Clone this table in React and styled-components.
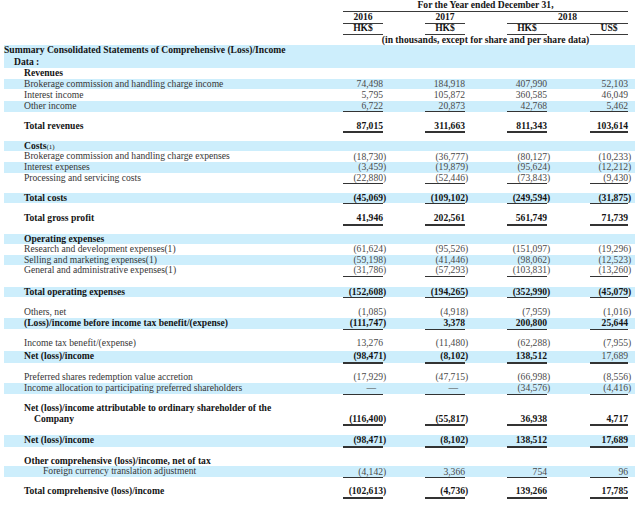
import React from 'react';
import styled, { createGlobalStyle } from 'styled-components';

const GlobalStyle = createGlobalStyle`
  html, body {
    margin: 0;
    padding: 0;
    background: #fff;
  }
  body {
    font-family: "Liberation Serif", "Times New Roman", serif;
    font-size: 9.6px;
    color: #333;
  }
`;

// label | 2016 | gap | 2017 | gap | 2018 HK$ | gap | 2018 US$ | trail
const COLS = '339px 44px 38px 44px 38px 44px 39px 42px 3px';
const VALUE_COLS = [2, 4, 6, 8];

const rows = [
  { label: 'Summary Consolidated Statements of Comprehensive (Loss)/Income', bold: true, band: true, indent: 0, h: 11.3 },
  { label: 'Data :', bold: true, band: true, indent: 10, h: 11.4 },
  { label: 'Revenues', bold: true, h: 11 },
  { label: 'Brokerage commission and handling charge income', band: true, values: ['74,498', '184,918', '407,990', '52,103'], h: 10.7 },
  { label: 'Interest income', values: ['5,795', '105,872', '360,585', '46,049'], h: 11.3 },
  { label: 'Other income', band: true, values: ['6,722', '20,873', '42,768', '5,462'], rule: 'single', h: 11 },
  { label: 'Total revenues', bold: true, values: ['87,015', '311,663', '811,343', '103,614'], rule: 'double', gap: 8.5, h: 13.3 },
  { label: 'Costs', note: '(1)', bold: true, band: true, gap: 7.2, h: 10.5 },
  { label: 'Brokerage commission and handling charge expenses', values: ['(18,730)', '(36,777)', '(80,127)', '(10,233)'], h: 11.1 },
  { label: 'Interest expenses', band: true, values: ['(3,459)', '(19,879)', '(95,624)', '(12,212)'], h: 10.4 },
  { label: 'Processing and servicing costs', values: ['(22,880)', '(52,446)', '(73,843)', '(9,430)'], rule: 'single', h: 10.6 },
  { label: 'Total costs', bold: true, band: true, values: ['(45,069)', '(109,102)', '(249,594)', '(31,875)'], rule: 'single', gap: 9.4, h: 10.6 },
  { label: 'Total gross profit', bold: true, values: ['41,946', '202,561', '561,749', '71,739'], rule: 'double', gap: 8.7, h: 14 },
  { label: 'Operating expenses', bold: true, band: true, gap: 8, h: 10.3 },
  { label: 'Research and development expenses(1)', values: ['(61,624)', '(95,526)', '(151,097)', '(19,296)'], h: 10.4 },
  { label: 'Selling and marketing expenses(1)', band: true, values: ['(59,198)', '(41,446)', '(98,062)', '(12,523)'], h: 10.3 },
  { label: 'General and administrative expenses(1)', values: ['(31,786)', '(57,293)', '(103,831)', '(13,260)'], rule: 'single', h: 10.5 },
  { label: 'Total operating expenses', bold: true, band: true, values: ['(152,608)', '(194,265)', '(352,990)', '(45,079)'], rule: 'single', gap: 11.2, h: 10.6 },
  { label: 'Others, net', values: ['(1,085)', '(4,918)', '(7,959)', '(1,016)'], gap: 8.5, h: 12.2 },
  { label: '(Loss)/income before income tax benefit/(expense)', bold: true, band: true, values: ['(111,747)', '3,378', '200,800', '25,644'], rule: 'single', h: 10.7 },
  { label: 'Income tax benefit/(expense)', values: ['13,276', '(11,480)', '(62,288)', '(7,955)'], gap: 9, h: 11 },
  { label: 'Net (loss)/income', bold: true, band: true, values: ['(98,471)', '(8,102)', '138,512', '17,689'], plain: [3], rule: 'double', gap: 2.6, h: 12.2 },
  { label: 'Preferred shares redemption value accretion', values: ['(17,929)', '(47,715)', '(66,998)', '(8,556)'], gap: 8.5, h: 11.3 },
  { label: 'Income allocation to participating preferred shareholders', band: true, values: ['—', '—', '(34,576)', '(4,416)'], rule: 'single', h: 11 },
  { lines: ['Net (loss)/income attributable to ordinary shareholder of the', 'Company'], bold: true, values: ['(116,400)', '(55,817)', '36,938', '4,717'], rule: 'double', gap: 8.2, h: 24 },
  { label: 'Net (loss)/income', bold: true, band: true, values: ['(98,471)', '(8,102)', '138,512', '17,689'], rule: 'double', gap: 8.5, h: 12 },
  { label: 'Other comprehensive (loss)/income, net of tax', bold: true, gap: 9, h: 10.7 },
  { label: 'Foreign currency translation adjustment', indent: 39, band: true, values: ['(4,142)', '3,366', '754', '96'], rule: 'single', h: 10.6 },
  { label: 'Total comprehensive (loss)/income', bold: true, values: ['(102,613)', '(4,736)', '139,266', '17,785'], rule: 'double', gap: 8.7, h: 13.3 },
];

const ruleWidth = rule => (rule === 'double' ? 2 : rule === 'single' ? 1 : 0);

export default function App() {
  return (
    <>
      <GlobalStyle />
      <Sheet>
        <HeadRow $h={11.5}>
          <HeadCell $col="2 / 9" $rule>For the Year ended December 31,</HeadCell>
        </HeadRow>
        <HeadRow $h={11.3}>
          <HeadCell $col="2" $rule>2016</HeadCell>
          <HeadCell $col="4" $rule>2017</HeadCell>
          <HeadCell $col="6 / 9" $rule>2018</HeadCell>
        </HeadRow>
        <HeadRow $h={11}>
          <HeadCell $col="2" $rule>HK$</HeadCell>
          <HeadCell $col="4" $rule>HK$</HeadCell>
          <HeadCell $col="6" $rule>HK$</HeadCell>
          <HeadCell $col="8" $rule>US$</HeadCell>
        </HeadRow>
        <HeadRow $h={11.2}>
          <HeadCell $col="2 / 9">(in thousands, except for share and per share data)</HeadCell>
        </HeadRow>

        {rows.map((row, i) => {
          const pad = ruleWidth(row.rule);
          return (
            <Row key={i} $h={row.h} $gap={row.gap} $band={row.band} $bold={row.bold}>
              {row.lines ? (
                <Label $indent={row.indent ?? 20} $pad={pad} $hang>
                  {row.lines[0]}
                  <br />
                  {row.lines[1]}
                </Label>
              ) : (
                <Label $indent={row.indent ?? 20} $pad={pad}>
                  {row.label}
                  {row.note && <Note>{row.note}</Note>}
                </Label>
              )}
              {row.values &&
                row.values.map((v, j) => {
                  const neg = v.endsWith(')');
                  const bold = row.bold && !(row.plain || []).includes(j);
                  return (
                    <Cell key={j} $col={VALUE_COLS[j]}>
                      <Num $rule={row.rule} $bold={bold} $dash={v === '—'}>
                        {neg ? v.slice(0, -1) : v}
                      </Num>
                      <Paren $pad={pad} $bold={bold}>{neg ? ')' : ''}</Paren>
                    </Cell>
                  );
                })}
            </Row>
          );
        })}
      </Sheet>
    </>
  );
}

const Sheet = styled.div`
  width: 631px;
  margin-left: 4px;
`;

const HeadRow = styled.div`
  display: grid;
  grid-template-columns: ${COLS};
  align-items: end;
  height: ${p => p.$h}px;
`;

const HeadCell = styled.div`
  grid-column: ${p => p.$col};
  margin-right: 4px;
  padding-bottom: ${p => (p.$rule ? 1 : 0)}px;
  text-align: center;
  font-weight: bold;
  color: #151515;
  line-height: 10px;
  border-bottom: ${p => (p.$rule ? '1px solid #3a3a3a' : 'none')};
`;

const Row = styled.div`
  display: grid;
  grid-template-columns: ${COLS};
  align-items: end;
  height: ${p => p.$h}px;
  margin-top: ${p => p.$gap || 0}px;
  background: ${p => (p.$band ? '#cdeefc' : 'transparent')};
  font-weight: ${p => (p.$bold ? 'bold' : 'normal')};
  color: ${p => (p.$bold ? '#141414' : '#363636')};
`;

const Label = styled.div`
  grid-column: 1;
  padding-left: ${p => (p.$hang ? p.$indent + 10 : p.$indent)}px;
  text-indent: ${p => (p.$hang ? -10 : 0)}px;
  padding-bottom: ${p => p.$pad}px;
  line-height: 10.8px;
  white-space: nowrap;
`;

const Note = styled.span`
  font-size: 7px;
  font-weight: normal;
`;

const Cell = styled.div`
  grid-column: ${p => p.$col};
  display: flex;
  align-items: flex-end;
`;

const Num = styled.div`
  flex: 1;
  text-align: right;
  line-height: 10.7px;
  white-space: nowrap;
  padding-right: ${p => (p.$dash ? 7 : 0)}px;
  color: ${p => (p.$bold ? '#141414' : '#4a4a4a')};
  font-weight: ${p => (p.$bold ? 'bold' : 'normal')};
  border-bottom: ${p =>
    p.$rule === 'double' ? '2px solid #333' : p.$rule === 'single' ? '1px solid #333' : 'none'};
`;

const Paren = styled.span`
  width: 4px;
  line-height: 10.7px;
  padding-bottom: ${p => p.$pad}px;
  color: ${p => (p.$bold ? '#141414' : '#4a4a4a')};
  font-weight: ${p => (p.$bold ? 'bold' : 'normal')};
`;
